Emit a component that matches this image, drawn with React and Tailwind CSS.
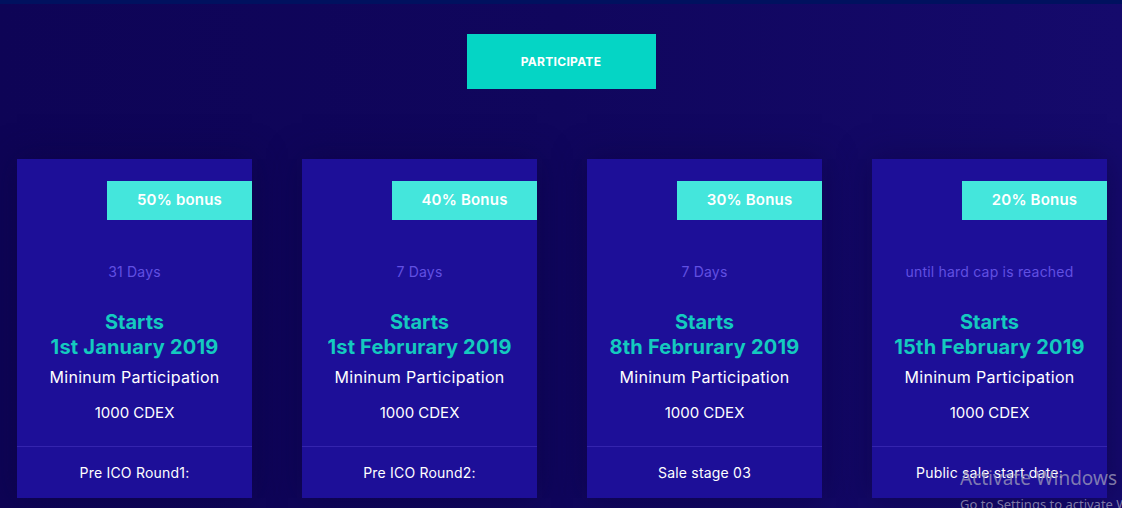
const rounds = [
  { bonus: "50% bonus", period: "31 Days", date: "1st January 2019", label: "Pre ICO Round1:" },
  { bonus: "40% Bonus", period: "7 Days", date: "1st Februrary 2019", label: "Pre ICO Round2:" },
  { bonus: "30% Bonus", period: "7 Days", date: "8th Februrary 2019", label: "Sale stage 03" },
  { bonus: "20% Bonus", period: "until hard cap is reached", date: "15th February 2019", label: "Public sale start date:" },
];

function RoundCard({ round }) {
  return (
    <div className="w-[235px] h-[339px] bg-[#1d0f98] flex flex-col shadow-[0_0_30px_rgba(10,0,60,0.5)]">
      <div className="pt-[22px] flex justify-end">
        <div className="w-[145px] h-[39px] bg-[#44e6dc] flex items-center justify-center text-white text-[15px] font-semibold tracking-[0.2px]">
          {round.bonus}
        </div>
      </div>
      <p className="mt-[42px] text-center text-[14px] leading-[20px] text-[#6150e2] tracking-[0.2px]">{round.period}</p>
      <div className="mt-[28px] text-center text-[20px] leading-[25px] font-bold text-[#14cabf]">
        <p>Starts</p>
        <p className="tracking-[0.2px]">{round.date}</p>
      </div>
      <p className="mt-[5px] text-center text-[16px] leading-[24px] text-white tracking-[0.3px]">Mininum Participation</p>
      <p className="mt-[12px] text-center text-[15px] leading-[24px] text-white">1000 CDEX</p>
      <div className="mt-[21px] border-t border-[#3424ae] flex-1 flex items-center justify-center text-[14px] text-white tracking-[0.2px]">
        {round.label}
      </div>
    </div>
  );
}

export default function App() {
  return (
    <div
      className="relative w-[1122px] h-[508px] overflow-hidden bg-gradient-to-r from-[#0e0456] via-[#10065d] to-[#150a6c]"
      style={{ fontFamily: "Inter, 'Open Sans', sans-serif" }}
    >
      <div className="h-[4px] bg-[#00115f]" />
      <div className="flex justify-center pt-[30px]">
        <button className="w-[189px] h-[55px] bg-[#05d5c5] text-white text-[12px] font-bold tracking-[0.3px]">
          PARTICIPATE
        </button>
      </div>
      <div className="mt-[70px] pl-[17px] flex gap-[50px]">
        {rounds.map((r) => (
          <RoundCard key={r.label} round={r} />
        ))}
      </div>
      <div className="absolute left-[960px] top-[466px] text-[#9a97b8]/80 pointer-events-none" style={{ fontFamily: "'Noto Sans', sans-serif" }}>
        <p className="text-[19px] leading-[24px]">Activate Windows</p>
        <p className="text-[13px] leading-[20px] mt-[4px] whitespace-nowrap">Go to Settings to activate Windows.</p>
      </div>
    </div>
  );
}
